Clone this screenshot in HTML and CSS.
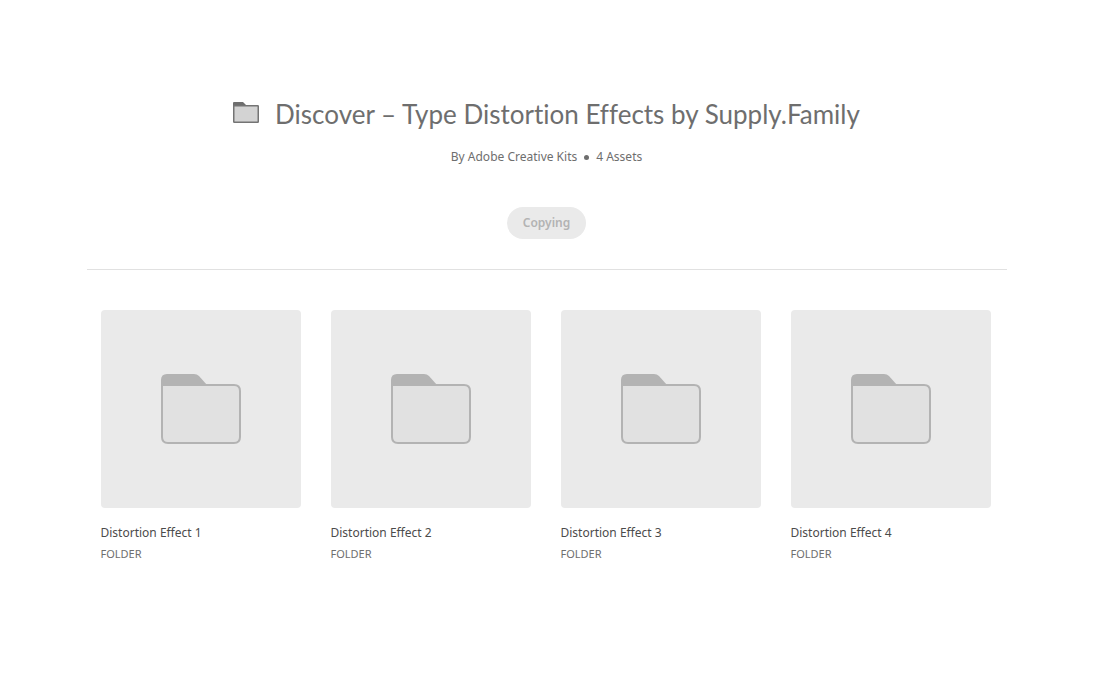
FILE: index.html
```html
<!DOCTYPE html>
<html lang="en">
<head>
<meta charset="utf-8">
<meta name="viewport" content="width=device-width, initial-scale=1">
<title>Discover – Type Distortion Effects by Supply.Family</title>
<link rel="stylesheet" href="styles.css">
</head>
<body>
<svg class="sprite" aria-hidden="true">
  <symbol id="folder" viewBox="0 0 80 70">
    <path d="M0 13V6Q0 0 6 0H33Q36 0 38 2L46 11V13Z" fill="#b3b3b3"/>
    <path d="M1 11H73Q79 11 79 17V63Q79 69 73 69H7Q1 69 1 63Z" fill="#e1e1e1" stroke="#b3b3b3" stroke-width="2"/>
  </symbol>
</svg>
<main class="page">
  <header class="header">
    <div class="heading">
      <svg class="heading-icon" viewBox="0 0 26 21" aria-hidden="true">
        <path d="M0 4V1Q0 0 1 0H10L13 3V5H0Z" fill="#6e6e6e"/>
        <rect x="0.75" y="3.75" width="24.5" height="16.5" rx="0.5" fill="#d3d3d3" stroke="#747474" stroke-width="1.5"/>
      </svg>
      <h1 class="title">Discover – Type Distortion Effects by Supply.Family</h1>
    </div>
    <p class="meta"><span>By Adobe Creative Kits</span><span class="dot"></span><span>4 Assets</span></p>
    <button class="copy" type="button" disabled>Copying</button>
  </header>
  <ul class="grid">
    <li class="card">
      <div class="thumb"><svg class="folder" aria-hidden="true"><use href="#folder"/></svg></div>
      <h2 class="name">Distortion Effect 1</h2>
      <p class="kind">FOLDER</p>
    </li>
    <li class="card">
      <div class="thumb"><svg class="folder" aria-hidden="true"><use href="#folder"/></svg></div>
      <h2 class="name">Distortion Effect 2</h2>
      <p class="kind">FOLDER</p>
    </li>
    <li class="card">
      <div class="thumb"><svg class="folder" aria-hidden="true"><use href="#folder"/></svg></div>
      <h2 class="name">Distortion Effect 3</h2>
      <p class="kind">FOLDER</p>
    </li>
    <li class="card">
      <div class="thumb"><svg class="folder" aria-hidden="true"><use href="#folder"/></svg></div>
      <h2 class="name">Distortion Effect 4</h2>
      <p class="kind">FOLDER</p>
    </li>
  </ul>
</main>
</body>
</html>
```
FILE: styles.css
```css
* { box-sizing: border-box; }
body {
  margin: 0;
  background: #fff;
  color: #6e6e6e;
  font-family: "Noto Sans", sans-serif;
}
h1, h2, p, ul { margin: 0; padding: 0; }
.sprite { display: none; }
.page {
  max-width: 920px;
  margin: 0 auto;
  padding: 94px 0 40px;
}
.header {
  display: flex;
  flex-direction: column;
  align-items: center;
  padding-bottom: 30px;
  border-bottom: 1px solid #e1e1e1;
}
.heading {
  display: flex;
  align-items: flex-start;
  gap: 16px;
}
.heading-icon { width: 26px; height: 21px; margin-top: 8px; flex: none; }
.title {
  font-family: Lato, "Noto Sans", sans-serif;
  font-size: 26px;
  line-height: 40px;
  font-weight: 400;
  font-variant-ligatures: none;
}
.meta {
  display: flex;
  align-items: center;
  margin-top: 13px;
  font-size: 12px;
  line-height: 20px;
}
.dot {
  width: 5px;
  height: 5px;
  margin: 0 7px;
  border-radius: 50%;
  background: #6e6e6e;
}
.copy {
  margin-top: 40px;
  height: 32px;
  padding: 0 16px 2px;
  border: 0;
  border-radius: 16px;
  background: #eaeaea;
  color: #b3b3b3;
  font: 600 12px "Noto Sans", sans-serif;
}
.grid {
  display: grid;
  grid-template-columns: repeat(auto-fill, minmax(200px, 1fr));
  gap: 30px;
  padding: 40px 16px 0 14px;
  list-style: none;
}
.thumb {
  display: flex;
  align-items: center;
  justify-content: center;
  height: 198px;
  border-radius: 4px;
  background: #eaeaea;
}
.folder { width: 80px; height: 70px; }
.name {
  margin-top: 15px;
  color: #4b4b4b;
  font-size: 12px;
  line-height: 20px;
  font-weight: 400;
}
.kind {
  margin-top: 3px;
  font-size: 11px;
  line-height: 16px;
}
```
